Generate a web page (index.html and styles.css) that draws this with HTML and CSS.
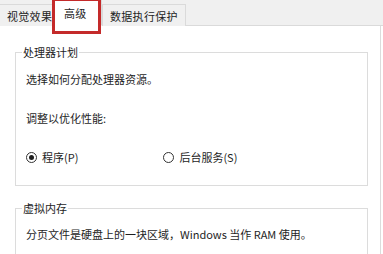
FILE: index.html
```html
<!DOCTYPE html>
<html lang="zh-CN">
<head>
  <meta charset="UTF-8">
  <title>性能选项</title>
  <link rel="stylesheet" href="styles.css">
</head>
<body>
  <div class="dialog">
    <div class="tabs">
      <div class="tab">视觉效果</div>
      <div class="tab active">高级</div>
      <div class="tab">数据执行保护</div>
      <div class="highlight"></div>
    </div>

    <div class="panel">
      <fieldset class="group">
        <legend>处理器计划</legend>
        <p class="line first">选择如何分配处理器资源。</p>
        <p class="line gap">调整以优化性能:</p>
        <div class="radios">
          <label class="radio"><span class="dot checked"></span>程序(P)</label>
          <label class="radio second"><span class="dot"></span>后台服务(S)</label>
        </div>
      </fieldset>

      <fieldset class="group memory">
        <legend>虚拟内存</legend>
        <p class="line first">分页文件是硬盘上的一块区域，Windows 当作 RAM 使用。</p>
        <p class="line faint">所有驱动器总分页文件大小:<span class="size">1920 MB</span></p>
      </fieldset>
    </div>
  </div>
</body>
</html>
```

FILE: styles.css
```css
body {
  margin: 0;
  background: #ffffff;
  font-family: "Noto Sans CJK SC", "Microsoft YaHei", sans-serif;
  font-size: 11px;
  color: #1e1e1e;
}

.dialog {
  width: 383px;
  height: 254px;
  overflow: hidden;
}

.tabs {
  position: relative;
  display: flex;
  align-items: flex-end;
  height: 25px;
  background: #f0f0f0;
  border-bottom: 1px solid #dadada;
}

.tab {
  height: 22px;
  line-height: 22px;
  padding: 0 7px;
  border: 1px solid #dadada;
  border-bottom: none;
  background: #f0f0f0;
  box-sizing: border-box;
  margin-bottom: -1px;
  white-space: nowrap;
  letter-spacing: 0.3px;
}

.tab:first-child {
  width: 54px;
  padding: 0 0 0 7px;
  border-left: none;
}

.tab.active {
  width: 49px;
  height: 27px;
  line-height: 27px;
  padding-left: 10px;
  background: #ffffff;
  border-bottom: 1px solid #ffffff;
  margin-left: -1px;
}

.tab:last-child {
  width: 80px;
  padding-left: 8px;
  border-left: none;
}

/* annotation box drawn over the active tab */
.highlight {
  position: absolute;
  left: 52px;
  top: -2px;
  width: 43px;
  height: 30px;
  border: 3px solid #c42a2a;
}

.panel {
  width: 381px;
  height: 228px;
  border-right: 1px solid #dcdcdc;
  padding-top: 19px;
  box-sizing: border-box;
}

.group {
  width: 353px;
  margin: 0 0 0 15px;
  padding: 0 10px 21px 10px;
  border: 1px solid #dcdcdc;
  box-sizing: border-box;
}

.group legend {
  margin-left: -4px;
  padding: 0 1px;
  line-height: 14px;
}

.line {
  margin: 0;
  line-height: 14px;
  white-space: nowrap;
}

.line.first {
  margin-top: 13px;
}

.line.gap {
  margin-top: 25px;
}

.radios {
  display: flex;
  margin-top: 25px;
  line-height: 14px;
}

.radio {
  display: flex;
  align-items: center;
  gap: 5px;
}

.radio.second {
  margin-left: 85px;
}

.dot {
  position: relative;
  width: 11px;
  height: 11px;
  border: 1px solid #333333;
  border-radius: 50%;
  box-sizing: border-box;
}

.dot.checked::after {
  content: "";
  position: absolute;
  left: 2px;
  top: 2px;
  width: 5px;
  height: 5px;
  border-radius: 50%;
  background: #1e1e1e;
}

.memory {
  margin-top: 15px;
  height: 80px;
}

.memory .line.first {
  margin-top: 12px;
}

.line.faint {
  margin-top: 19px;
  color: #d4d4d4;
}

.size {
  margin-left: 76px;
}
```
